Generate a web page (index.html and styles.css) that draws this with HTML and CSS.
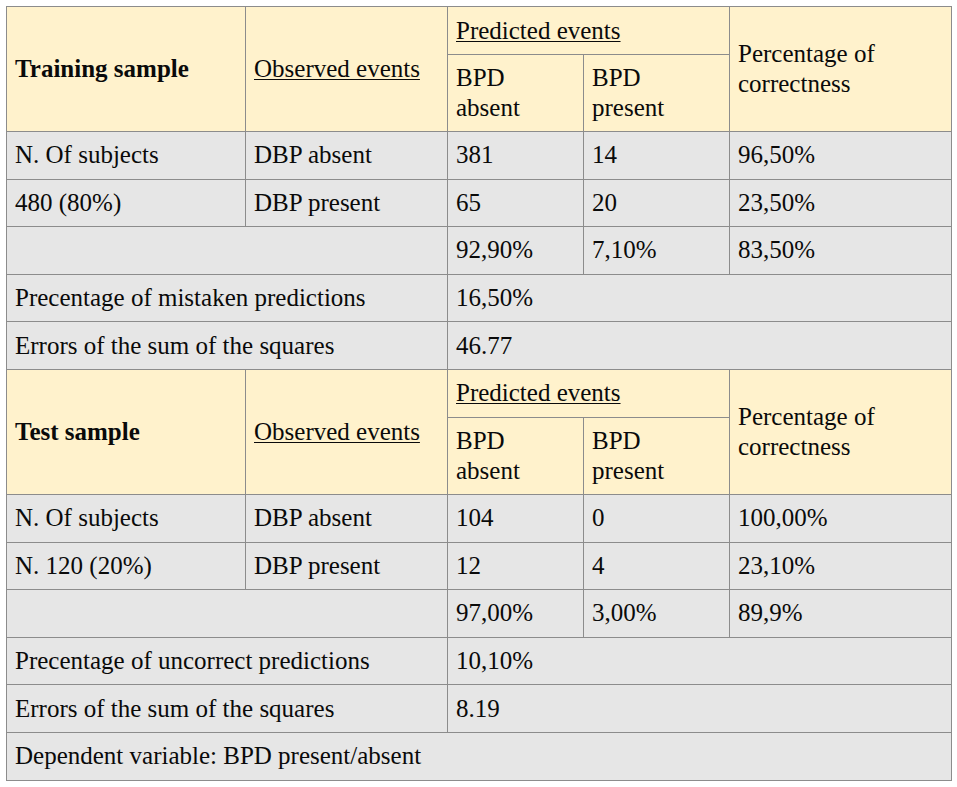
FILE: index.html
```html
<!DOCTYPE html>
<html>
<head>
<meta charset="utf-8">
<link rel="stylesheet" href="styles.css">
</head>
<body>
<div class="wrap">
<table class="results">
  <colgroup>
    <col class="c1"><col class="c2"><col class="c3"><col class="c4"><col class="c5">
  </colgroup>
  <tbody>
    <tr class="head top">
      <td rowspan="2" class="bold">Training sample</td>
      <td rowspan="2"><span class="u">Observed events</span></td>
      <td colspan="2"><span class="u">Predicted events</span></td>
      <td rowspan="2">Percentage of<br>correctness</td>
    </tr>
    <tr class="head sub">
      <td>BPD<br>absent</td>
      <td>BPD<br>present</td>
    </tr>
    <tr><td>N. Of subjects</td><td>DBP absent</td><td>381</td><td>14</td><td>96,50%</td></tr>
    <tr><td>480 (80%)</td><td>DBP present</td><td>65</td><td>20</td><td>23,50%</td></tr>
    <tr><td colspan="2"></td><td>92,90%</td><td>7,10%</td><td>83,50%</td></tr>
    <tr><td colspan="2">Precentage of mistaken predictions</td><td colspan="3">16,50%</td></tr>
    <tr><td colspan="2">Errors of the sum of the squares</td><td colspan="3">46.77</td></tr>
    <tr class="head top">
      <td rowspan="2" class="bold">Test sample</td>
      <td rowspan="2"><span class="u">Observed events</span></td>
      <td colspan="2"><span class="u">Predicted events</span></td>
      <td rowspan="2">Percentage of<br>correctness</td>
    </tr>
    <tr class="head sub">
      <td>BPD<br>absent</td>
      <td>BPD<br>present</td>
    </tr>
    <tr><td>N. Of subjects</td><td>DBP absent</td><td>104</td><td>0</td><td>100,00%</td></tr>
    <tr><td>N. 120 (20%)</td><td>DBP present</td><td>12</td><td>4</td><td>23,10%</td></tr>
    <tr><td colspan="2"></td><td>97,00%</td><td>3,00%</td><td>89,9%</td></tr>
    <tr><td colspan="2">Precentage of uncorrect predictions</td><td colspan="3">10,10%</td></tr>
    <tr><td colspan="2">Errors of the sum of the squares</td><td colspan="3">8.19</td></tr>
    <tr><td colspan="5">Dependent variable: BPD present/absent</td></tr>
  </tbody>
</table>
</div>
</body>
</html>
```

FILE: styles.css
```css
html, body {
  margin: 0;
  padding: 0;
  background: #ffffff;
}
.wrap {
  padding: 6px 0 0 6px;
}
.results {
  border-collapse: collapse;
  table-layout: fixed;
  width: 945px;
  font-family: "Liberation Serif", "Times New Roman", serif;
  font-size: 25px;
  line-height: 30px;
  color: #0a0a0a;
}
.c1 { width: 239px; }
.c2 { width: 202px; }
.c3 { width: 136px; }
.c4 { width: 146px; }
.c5 { width: 222px; }
.results td {
  border: 1px solid #8c8c8c;
  background: #e6e6e6;
  padding: 0 8px;
  height: 46.6px;
  vertical-align: middle;
  white-space: nowrap;
}
.results tr.head td {
  background: #fff2cc;
}
.results tr.head.top td {
  height: 47px;
}
.results tr.sub td {
  height: 76px;
}
.bold {
  font-weight: bold;
}
.u {
  text-decoration: underline;
  text-underline-offset: 2px;
  text-decoration-thickness: 1px;
}
```
